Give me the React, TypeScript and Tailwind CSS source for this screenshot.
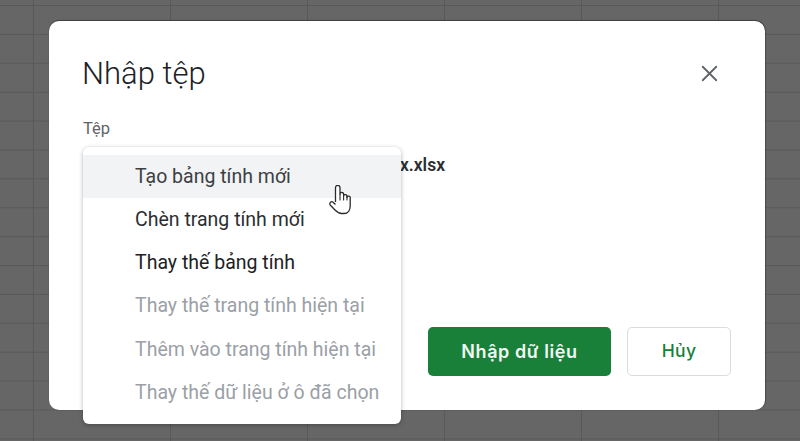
import { X } from "lucide-react";

const items = [
  { label: "Tạo bảng tính mới", cls: "text-[#3c4043] bg-[#f1f3f4]" },
  { label: "Chèn trang tính mới", cls: "text-[#2b2e31]" },
  { label: "Thay thế bảng tính", cls: "text-[#202124]" },
  { label: "Thay thế trang tính hiện tại", cls: "text-[#9aa0a6]" },
  { label: "Thêm vào trang tính hiện tại", cls: "text-[#9aa0a6]" },
  { label: "Thay thế dữ liệu ở ô đã chọn", cls: "text-[#9aa0a6]" },
];

function Hand() {
  return (
    <svg width="22" height="30" viewBox="0 0 22 30" fill="none" className="absolute left-[329px] top-[185px]">
      <path
        d="M6.5 17V2.7A2.2 2.2 0 0 1 11 2.7V9A1.8 1.8 0 0 1 14.6 9.6V10.6A1.8 1.8 0 0 1 18 11V12.4A1.6 1.6 0 0 1 21.2 13V21C21.2 25 19 28.5 15 28.5H12.5C9.5 28.5 8 27 6 25L1.2 20C0 18.4 2 15.8 3.8 17L6.5 19.5"
        fill="#fff"
        stroke="#2a2a2a"
        strokeWidth="1.3"
        strokeLinejoin="round"
      />
      <path d="M11 9V15M14.6 10V15M18 11.5V15" stroke="#2a2a2a" strokeWidth="1.1" strokeLinecap="round" />
    </svg>
  );
}

export default function App() {
  return (
    <div className="relative h-[441px] w-[800px] overflow-hidden bg-[#666666] bg-[linear-gradient(to_right,#595959_1px,transparent_1px),linear-gradient(to_bottom,#595959_1px,transparent_1px)] bg-[size:137px_28.9px] bg-[position:33px_5px] pl-[49px] pt-[21px] font-['Roboto',sans-serif]">
      <div className="flex h-[389px] w-[716px] flex-col rounded-[10px] bg-white pb-[34px] pl-[34px] pr-[34px] pt-[32px] shadow-[0_-1px_1px_rgba(0,0,0,0.35),1px_0_1px_rgba(0,0,0,0.25)]">
        <div className="flex items-start justify-between">
          <h1 className="-ml-[1px] text-[31px] font-light leading-[42px] text-[#202124]">Nhập tệp</h1>
          <button className="mr-[8px] mt-[7px] text-[#5f6368]">
            <X size={27} strokeWidth={1.6} />
          </button>
        </div>
        <div className="mt-[24px] text-[16.5px] leading-[20px] text-[#5f6368]">Tệp</div>
        <div className="mt-[15px] w-[362px] text-right text-[17.5px] font-semibold leading-[22px] text-[#2b2e31]">
          Tệp Excel xlsx.xlsx
        </div>
        <div className="mt-auto flex justify-end gap-[16px] font-['Inter',sans-serif]">
          <button className="h-[49px] w-[183px] rounded-[5px] bg-[#188038] text-[18px] font-semibold tracking-[0.6px] text-[#f1f8f3]">
            Nhập dữ liệu
          </button>
          <button className="h-[49px] w-[104px] rounded-[5px] border border-[#dadce0] bg-white text-[17.5px] font-medium tracking-[0.3px] text-[#188038]">
            Hủy
          </button>
        </div>
      </div>
      <div className="absolute left-[83px] top-[147px] h-[277px] w-[318px] rounded-[6px] bg-white py-[8px] shadow-[0_1px_4px_rgba(0,0,0,0.3)]">
        {items.map((it) => (
          <div key={it.label} className={`flex h-[43.3px] items-center pb-[1px] pl-[52px] text-[19.5px] ${it.cls}`}>
            {it.label}
          </div>
        ))}
      </div>
      <Hand />
    </div>
  );
}
